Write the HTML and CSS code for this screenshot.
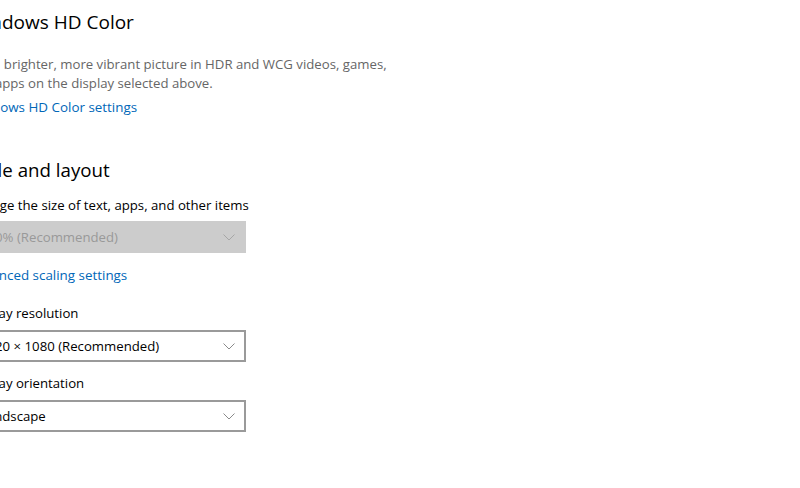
FILE: index.html
```html
<!DOCTYPE html>
<html lang="en">
<head>
<meta charset="utf-8">
<title>Display settings</title>
<link rel="stylesheet" href="styles.css">
</head>
<body>
<main class="page">
  <section class="group hd">
    <h2 class="heading">Windows HD Color</h2>
    <p class="desc">Get a brighter, more vibrant picture in HDR and WCG videos, games, and apps on the display selected above.</p>
    <a class="link" href="#">Windows HD Color settings</a>
  </section>
  <section class="group scale">
    <h2 class="heading">Scale and layout</h2>
    <div class="field">
      <div class="label">Change the size of text, apps, and other items</div>
      <div class="select disabled">
        <span class="value">100% (Recommended)</span>
        <svg class="chev" width="12" height="7" viewBox="0 0 12 7"><path d="M0.5 0.5 L6 6 L11.5 0.5" fill="none" stroke="currentColor" stroke-width="1"/></svg>
      </div>
    </div>
    <a class="link link-adv" href="#">Advanced scaling settings</a>
    <div class="field field-res">
      <div class="label">Display resolution</div>
      <div class="select">
        <span class="value">1920 × 1080 (Recommended)</span>
        <svg class="chev" width="12" height="7" viewBox="0 0 12 7"><path d="M0.5 0.5 L6 6 L11.5 0.5" fill="none" stroke="currentColor" stroke-width="1"/></svg>
      </div>
    </div>
    <div class="field field-or">
      <div class="label">Display orientation</div>
      <div class="select">
        <span class="value">Landscape</span>
        <svg class="chev" width="12" height="7" viewBox="0 0 12 7"><path d="M0.5 0.5 L6 6 L11.5 0.5" fill="none" stroke="currentColor" stroke-width="1"/></svg>
      </div>
    </div>
  </section>
</main>
</body>
</html>
```
FILE: styles.css
```css
html, body {
  margin: 0;
  padding: 0;
  background: #ffffff;
  overflow: hidden;
}
body {
  width: 800px;
  height: 488px;
  font-family: "Open Sans", "Noto Sans", sans-serif;
  color: #000;
  font-size: 13.2px;
}
.page {
  margin-left: -32px;
  padding-top: 8px;
  display: flex;
  flex-direction: column;
}
.group {
  display: flex;
  flex-direction: column;
  align-items: flex-start;
}
.heading {
  margin: 0;
  font-size: 19px;
  font-weight: 400;
  line-height: 28px;
}
.scale .heading {
  font-size: 18.7px;
}
.desc {
  margin: 19px 0 0;
  width: 430px;
  color: #666;
  font-size: 13.2px;
  line-height: 19px;
}
.link {
  color: #0067b8;
  text-decoration: none;
  font-size: 13.4px;
  line-height: 20px;
  margin-top: 4px;
}
.scale {
  margin-top: 39px;
}
.field {
  display: flex;
  flex-direction: column;
  margin-top: 11px;
}
.label {
  font-size: 13.2px;
  line-height: 20px;
  color: #000;
}
.select {
  margin-top: 6px;
  box-sizing: border-box;
  width: 278px;
  height: 32px;
  border: 2px solid #9a9a9a;
  display: flex;
  align-items: center;
  justify-content: space-between;
  padding: 0 9px 0 10px;
  color: #000;
}
.select .value {
  font-size: 13.2px;
}
.select .chev {
  color: #8a8a8a;
}
.select.disabled {
  background: #cccccc;
  border-color: #cccccc;
  color: #999;
}
.select.disabled .chev {
  color: #a6a6a6;
}
.link-adv {
  margin-top: 12px;
}
.field-res {
  margin-top: 18px;
}
.field-res .select,
.field-or .select {
  margin-top: 7px;
}
.field-or {
  margin-top: 11px;
}
```
